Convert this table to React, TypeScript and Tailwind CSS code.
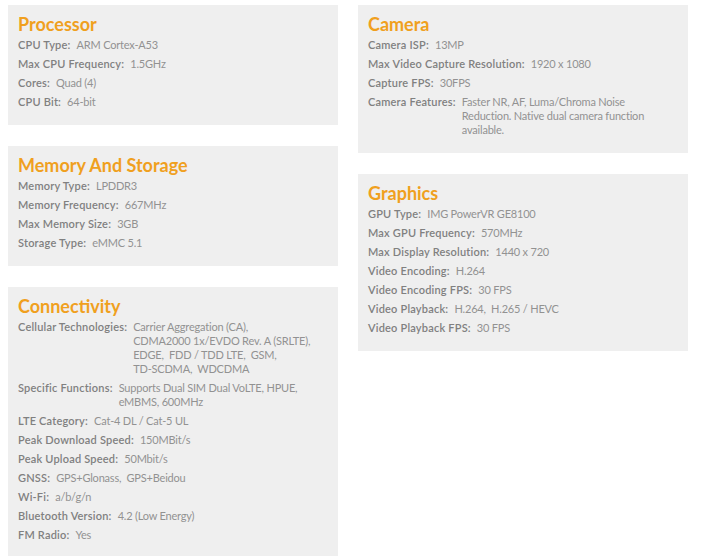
import React from "react";

type Row = { label: string; value: string[] };
type Section = { title: string; rows: Row[]; pb: string };

const left: Section[] = [
  {
    title: "Processor",
    pb: "pb-[16px]",
    rows: [
      { label: "CPU Type:", value: ["ARM Cortex-A53"] },
      { label: "Max CPU Frequency:", value: ["1.5GHz"] },
      { label: "Cores:", value: ["Quad (4)"] },
      { label: "CPU Bit:", value: ["64-bit"] },
    ],
  },
  {
    title: "Memory And Storage",
    pb: "pb-[16px]",
    rows: [
      { label: "Memory Type:", value: ["LPDDR3"] },
      { label: "Memory Frequency:", value: ["667MHz"] },
      { label: "Max Memory Size:", value: ["3GB"] },
      { label: "Storage Type:", value: ["eMMC 5.1"] },
    ],
  },
  {
    title: "Connectivity",
    pb: "pb-[14px]",
    rows: [
      {
        label: "Cellular Technologies:",
        value: [
          "Carrier Aggregation (CA),",
          "CDMA2000 1x/EVDO Rev. A (SRLTE),",
          "EDGE,  FDD / TDD LTE,  GSM,",
          "TD-SCDMA,  WDCDMA",
        ],
      },
      { label: "Specific Functions:", value: ["Supports Dual SIM Dual VoLTE, HPUE,", "eMBMS, 600MHz"] },
      { label: "LTE Category:", value: ["Cat-4 DL / Cat-5 UL"] },
      { label: "Peak Download Speed:", value: ["150MBit/s"] },
      { label: "Peak Upload Speed:", value: ["50Mbit/s"] },
      { label: "GNSS:", value: ["GPS+Glonass,  GPS+Beidou"] },
      { label: "Wi-Fi:", value: ["a/b/g/n"] },
      { label: "Bluetooth Version:", value: ["4.2 (Low Energy)"] },
      { label: "FM Radio:", value: ["Yes"] },
    ],
  },
];

const right: Section[] = [
  {
    title: "Camera",
    pb: "pb-[16px]",
    rows: [
      { label: "Camera ISP:", value: ["13MP"] },
      { label: "Max Video Capture Resolution:", value: ["1920 x 1080"] },
      { label: "Capture FPS:", value: ["30FPS"] },
      {
        label: "Camera Features:",
        value: ["Faster NR, AF, Luma/Chroma Noise", "Reduction. Native dual camera function", "available."],
      },
    ],
  },
  {
    title: "Graphics",
    pb: "pb-[16px]",
    rows: [
      { label: "GPU Type:", value: ["IMG PowerVR GE8100"] },
      { label: "Max GPU Frequency:", value: ["570MHz"] },
      { label: "Max Display Resolution:", value: ["1440 x 720"] },
      { label: "Video Encoding:", value: ["H.264"] },
      { label: "Video Encoding FPS:", value: ["30 FPS"] },
      { label: "Video Playback:", value: ["H.264,  H.265 / HEVC"] },
      { label: "Video Playback FPS:", value: ["30 FPS"] },
    ],
  },
];

function Card({ s }: { s: Section }) {
  return (
    <div className={`bg-[#efefef] px-[10px] pt-[7px] ${s.pb}`}>
      <h2 className="text-[18px] leading-[24px] font-bold text-[#f0a01e] tracking-[0px]">{s.title}</h2>
      <div className="mt-[2px] flex flex-col gap-[5px]">
        {s.rows.map((r) => (
          <div key={r.label} className="flex text-[11px] leading-[14px]">
            <span className="shrink-0 font-semibold text-[#808080] tracking-[0.2px]">{r.label}</span>
            <span className="ml-[6px] text-[#929292] whitespace-pre tracking-[-0.2px]">
              {r.value.map((v, i) => (
                <div key={i}>{v}</div>
              ))}
            </span>
          </div>
        ))}
      </div>
    </div>
  );
}

export default function App() {
  return (
    <div className="w-[702px] h-[560px] bg-white pl-[8px] pt-[5px] flex gap-[20px]" style={{ fontFamily: "Lato, 'Open Sans', sans-serif" }}>
      <div className="w-[330px] flex flex-col gap-[21px]">
        {left.map((s) => (
          <Card key={s.title} s={s} />
        ))}
      </div>
      <div className="w-[330px] flex flex-col gap-[21px] self-start">
        {right.map((s) => (
          <Card key={s.title} s={s} />
        ))}
      </div>
    </div>
  );
}
